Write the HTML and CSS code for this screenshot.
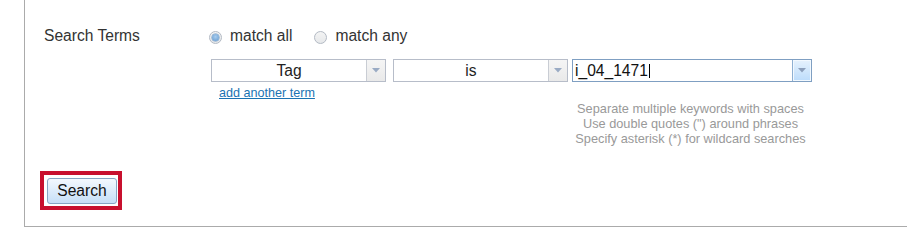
FILE: index.html
```html
<!DOCTYPE html>
<html lang="en">
<head>
<meta charset="utf-8">
<title>Search Terms</title>
<link rel="stylesheet" href="styles.css">
</head>
<body>
<div class="panel">
  <div class="row">
    <div class="label">Search Terms</div>
    <div class="fields">
      <div class="radios">
        <span class="radio checked"></span><span class="rlabel">match all</span>
        <span class="radio"></span><span class="rlabel">match any</span>
      </div>
      <div class="terms">
        <div class="term">
          <div class="combo sel tag">
            <span class="val">Tag</span>
            <span class="arrow"><svg width="8" height="5" viewBox="0 0 8 5"><path d="M0 0H8L4 4.5Z" fill="#9aabc4"/></svg></span>
          </div>
          <a class="add" href="#">add another term</a>
        </div>
        <div class="term">
          <div class="combo sel is">
            <span class="val">is</span>
            <span class="arrow"><svg width="8" height="5" viewBox="0 0 8 5"><path d="M0 0H8L4 4.5Z" fill="#9aabc4"/></svg></span>
          </div>
        </div>
        <div class="term">
          <div class="combo input">
            <span class="txt">i_04_1471</span><span class="caret"></span>
            <span class="arrow"><svg width="8" height="5" viewBox="0 0 8 5"><path d="M0 0H8L4 4.5Z" fill="#8c9fbb"/></svg></span>
          </div>
          <div class="help">
            Separate multiple keywords with spaces<br>
            Use double quotes (") around phrases<br>
            Specify asterisk (*) for wildcard searches
          </div>
        </div>
      </div>
    </div>
  </div>
  <div class="btnwrap">
    <button class="btn" type="button">Search</button>
  </div>
</div>
</body>
</html>
```

FILE: styles.css
```css
html, body {
  margin: 0;
  padding: 0;
  background: #fff;
}
body {
  font-family: "Liberation Sans", Arial, sans-serif;
  color: #333;
}
.panel {
  margin-left: 24px;
  border-left: 1px solid #ababab;
  border-bottom: 1px solid #ababab;
  padding: 27px 0 16px 0;
}
.row {
  display: flex;
}
.label {
  width: 165px;
  padding-left: 19px;
  font-size: 15.6px;
  line-height: 18px;
  color: #333;
}
.fields {
  display: flex;
  flex-direction: column;
}
.radios {
  display: flex;
  align-items: center;
  height: 18px;
  font-size: 15.6px;
  line-height: 18px;
}
.radio {
  width: 11px;
  height: 11px;
  border: 1px solid #b3bac4;
  border-radius: 50%;
  background: linear-gradient(#f4f4f4, #e6e8ea);
  position: relative;
  margin-top: 2px;
}
.radio.checked::after {
  content: "";
  position: absolute;
  left: 2px;
  top: 2px;
  width: 7px;
  height: 7px;
  border-radius: 50%;
  background: radial-gradient(circle at 50% 40%, #a9cdee 0%, #6fa2d4 80%);
  box-shadow: 0 0 0 0.5px #6f97c0;
}
.rlabel {
  margin-left: 8px;
}
.rlabel + .radio {
  margin-left: 22px;
}
.terms {
  display: flex;
  margin-top: 14px;
  margin-left: 2px;
}
.term {
  display: flex;
  flex-direction: column;
}
.combo {
  display: flex;
  align-items: center;
  height: 21px;
  border: 1px solid #b7bdc9;
  background: #fff;
  font-size: 15.6px;
  color: #222;
}
.sel {
  width: 173px;
}
.tag {
  margin-right: 7px;
}
.is {
  margin-right: 4px;
}
.sel .val {
  flex: 1;
  text-align: center;
}
.arrow {
  width: 18px;
  height: 21px;
  display: flex;
  align-items: center;
  justify-content: center;
  border-left: 1px solid #c9cdd4;
  background: linear-gradient(#f5f5f5, #e9e9e9);
}
.input {
  width: 238px;
  border-color: #7f9fc2;
}
.input .txt {
  margin-left: 2px;
  color: #111;
}
.caret {
  width: 1px;
  height: 14px;
  background: #000;
  margin-left: 1px;
}
.input .arrow {
  margin-left: auto;
  border-left: 1px solid #8eb0d2;
  background: linear-gradient(#e6f2fd, #bcdcfb);
  box-shadow: inset 0 0 0 1px #f2f9ff;
}
.add {
  margin-top: 4px;
  margin-left: 8px;
  font-size: 12.6px;
  line-height: 15px;
  color: #1a73b3;
  text-decoration: underline;
}
.help {
  margin-top: 19px;
  width: 237px;
  text-align: center;
  font-size: 12.75px;
  line-height: 15px;
  color: #999;
}
.btnwrap {
  display: inline-block;
  margin: 25px 0 0 15px;
  border: 4px solid #c8102e;
  padding: 3px 1px 2px 3px;
}
.btn {
  display: block;
  width: 70px;
  height: 26px;
  padding: 0;
  border: 1px solid #87a5c4;
  border-radius: 3px;
  background: linear-gradient(#f3f8fe, #c6dff7);
  font-family: "Liberation Sans", Arial, sans-serif;
  font-size: 15.6px;
  color: #111;
  line-height: 22px;
}
```
